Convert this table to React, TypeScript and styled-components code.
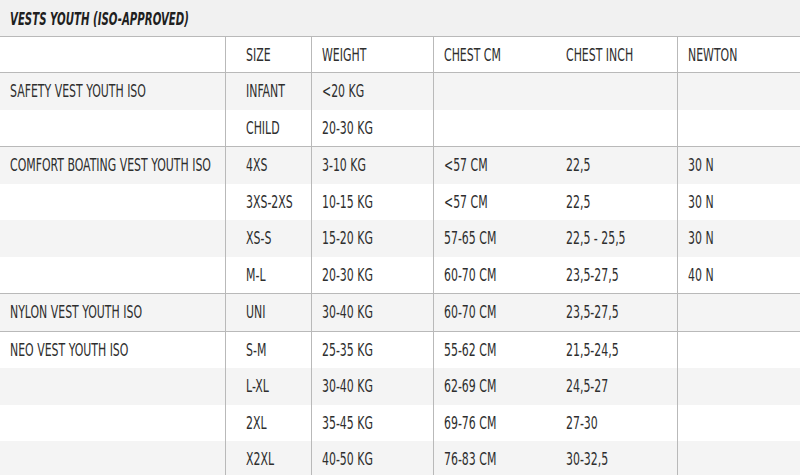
import React from 'react';
import styled, { createGlobalStyle } from 'styled-components';

const GlobalStyle = createGlobalStyle`
  body {
    margin: 0;
    background: #ffffff;
    font-family: "DejaVu Sans Condensed", "DejaVu Sans", "Liberation Sans", sans-serif;
  }
`;

const LINE = '#b9b9b9';

const Page = styled.div`
  width: 800px;
  height: 475px;
  overflow: hidden;
  color: #2e2e2e;
`;

const TitleBar = styled.div`
  height: 36px;
  display: flex;
  align-items: center;
  padding-left: 10px;
  background: #f1f1f1;
  border-bottom: 1px solid ${LINE};
`;

// the source font is a very narrow face, squeeze the installed condensed one to match
const Title = styled.h1`
  margin: 0;
  font-size: 18px;
  font-weight: 700;
  font-style: italic;
  color: #1f1f1f;
  white-space: nowrap;
  transform: scaleX(0.63);
  transform-origin: left center;
`;

const Group = styled.div`
  border-bottom: 1px solid ${LINE};
`;

const Row = styled.div<{ shaded?: boolean; header?: boolean }>`
  display: grid;
  grid-template-columns: 226px 86px 122px 122px 122px 1fr;
  height: ${p => (p.header ? '35px' : '36.5px')};
  background: ${p => (p.shaded ? '#f4f4f4' : '#ffffff')};
  ${p => p.header && `border-bottom: 1px solid ${LINE};`}
`;

const Cell = styled.div<{ divider?: boolean; wide?: boolean }>`
  display: flex;
  align-items: center;
  padding-left: ${p => (p.wide ? '20px' : '10px')};
  white-space: nowrap;
  border-right: ${p => (p.divider ? `1px solid ${LINE}` : 'none')};
`;

const Text = styled.span`
  display: inline-block;
  font-size: 17px;
  transform: scaleX(0.715);
  transform-origin: left center;
`;

type Line = [string, string, string, string, string, string];

const groups: Line[][] = [
  [
    ['SAFETY VEST YOUTH ISO', 'INFANT', '<20 KG', '', '', ''],
    ['', 'CHILD', '20-30 KG', '', '', ''],
  ],
  [
    ['COMFORT BOATING VEST YOUTH ISO', '4XS', '3-10 KG', '<57 CM', '22,5', '30 N'],
    ['', '3XS-2XS', '10-15 KG', '<57 CM', '22,5', '30 N'],
    ['', 'XS-S', '15-20 KG', '57-65 CM', '22,5 - 25,5', '30 N'],
    ['', 'M-L', '20-30 KG', '60-70 CM', '23,5-27,5', '40 N'],
  ],
  [['NYLON VEST YOUTH ISO', 'UNI', '30-40 KG', '60-70 CM', '23,5-27,5', '']],
  [
    ['NEO VEST YOUTH ISO', 'S-M', '25-35 KG', '55-62 CM', '21,5-24,5', ''],
    ['', 'L-XL', '30-40 KG', '62-69 CM', '24,5-27', ''],
    ['', '2XL', '35-45 KG', '69-76 CM', '27-30', ''],
    ['', 'X2XL', '40-50 KG', '76-83 CM', '30-32,5', ''],
  ],
];

const dividers = [true, true, true, false, true, false];

const Cells: React.FC<{ line: Line }> = ({ line }) => (
  <>
    {line.map((text, i) => (
      <Cell key={i} divider={dividers[i]} wide={i === 1}>
        {text && <Text>{text}</Text>}
      </Cell>
    ))}
  </>
);

export default function App() {
  let index = 0;

  return (
    <Page>
      <GlobalStyle />
      <TitleBar>
        <Title>VESTS YOUTH (ISO-APPROVED)</Title>
      </TitleBar>
      <Row header>
        <Cells line={['', 'SIZE', 'WEIGHT', 'CHEST CM', 'CHEST INCH', 'NEWTON']} />
      </Row>
      {groups.map((rows, g) => (
        <Group key={g}>
          {rows.map((line, r) => {
            const shaded = index++ % 2 === 0;
            return (
              <Row key={r} shaded={shaded}>
                <Cells line={line} />
              </Row>
            );
          })}
        </Group>
      ))}
    </Page>
  );
}
